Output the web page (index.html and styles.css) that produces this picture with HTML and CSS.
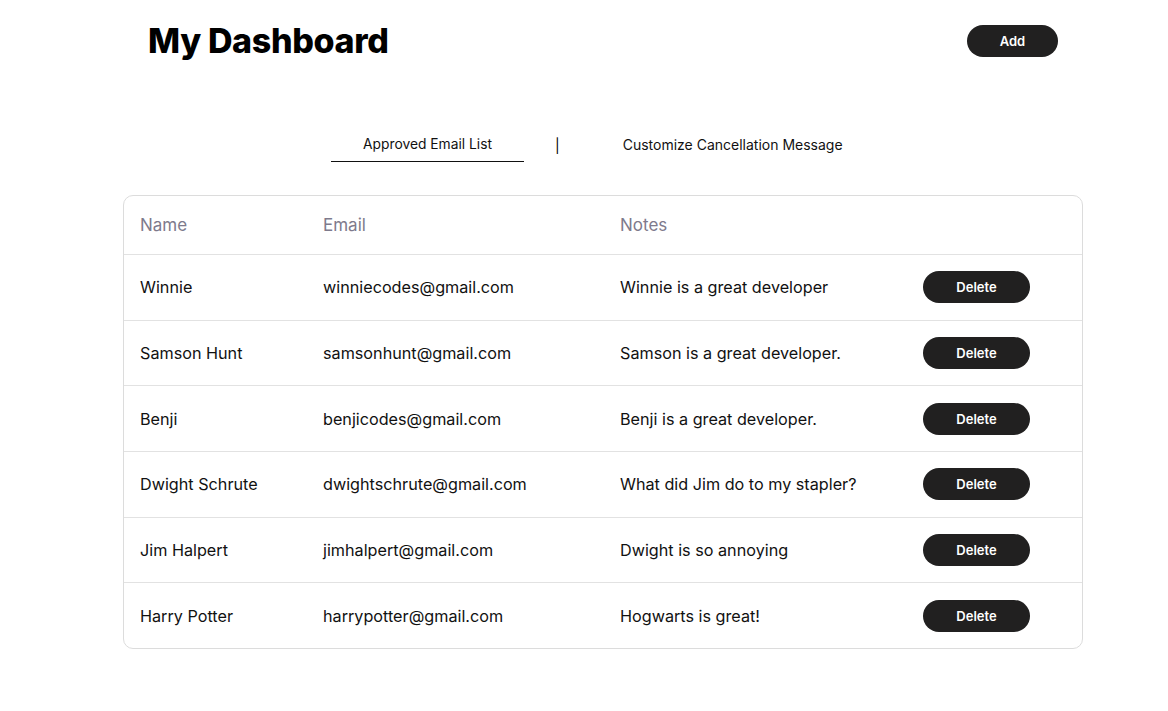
FILE: index.html
```html
<!DOCTYPE html>
<html>
<head>
<meta charset="utf-8">
<link rel="stylesheet" href="styles.css">
</head>
<body>
<div class="page">
  <header class="top">
    <h1 class="title">My Dashboard</h1>
    <button class="btn btn-add">Add</button>
  </header>
  <nav class="tabs">
    <div class="tab active">Approved Email List</div>
    <div class="sep">|</div>
    <div class="tab">Customize Cancellation Message</div>
  </nav>
  <div class="card">
    <div class="row head">
      <div class="cell">Name</div>
      <div class="cell">Email</div>
      <div class="cell">Notes</div>
      <div class="cell"></div>
    </div>
    <div class="row">
      <div class="cell">Winnie</div>
      <div class="cell">winniecodes@gmail.com</div>
      <div class="cell">Winnie is a great developer</div>
      <div class="cell"><button class="btn btn-del">Delete</button></div>
    </div>
    <div class="row">
      <div class="cell">Samson Hunt</div>
      <div class="cell">samsonhunt@gmail.com</div>
      <div class="cell">Samson is a great developer.</div>
      <div class="cell"><button class="btn btn-del">Delete</button></div>
    </div>
    <div class="row">
      <div class="cell">Benji</div>
      <div class="cell">benjicodes@gmail.com</div>
      <div class="cell">Benji is a great developer.</div>
      <div class="cell"><button class="btn btn-del">Delete</button></div>
    </div>
    <div class="row">
      <div class="cell">Dwight Schrute</div>
      <div class="cell">dwightschrute@gmail.com</div>
      <div class="cell">What did Jim do to my stapler?</div>
      <div class="cell"><button class="btn btn-del">Delete</button></div>
    </div>
    <div class="row">
      <div class="cell">Jim Halpert</div>
      <div class="cell">jimhalpert@gmail.com</div>
      <div class="cell">Dwight is so annoying</div>
      <div class="cell"><button class="btn btn-del">Delete</button></div>
    </div>
    <div class="row">
      <div class="cell">Harry Potter</div>
      <div class="cell">harrypotter@gmail.com</div>
      <div class="cell">Hogwarts is great!</div>
      <div class="cell"><button class="btn btn-del">Delete</button></div>
    </div>
  </div>
</div>
</body>
</html>
```
FILE: styles.css
```css
* { box-sizing: border-box; }
html, body { margin: 0; padding: 0; background: #fff; }
body {
  font-family: "Inter", "Open Sans", sans-serif;
  color: #111;
}
.page {
  width: 1168px;
  padding: 0 86px 0 123px;
}
.top {
  display: flex;
  justify-content: space-between;
  align-items: center;
  height: 82px;
  padding: 0 24px 0 25px;
}
.title {
  margin: 0;
  margin-top: -1px;
  font-size: 34px;
  font-weight: 800;
  letter-spacing: -0.35px;
  color: #000;
}
.btn {
  border: none;
  background: #212020;
  color: #fff;
  font-family: inherit;
  font-weight: 600;
  border-radius: 16px;
  cursor: pointer;
}
.btn-add {
  width: 91px;
  height: 32px;
  font-size: 13px;
  margin-top: -1px;
}
.tabs {
  display: flex;
  align-items: flex-start;
  margin-top: 45px;
  padding-left: 208px;
  height: 68px;
}
.tab {
  font-size: 14px;
  color: #111;
  line-height: 17px;
  padding-top: 9px;
}
.tab.active {
  font-size: 13.8px;
  width: 193px;
  text-align: center;
  padding-bottom: 8px;
  border-bottom: 1px solid #111;
}
.sep {
  font-size: 14px;
  line-height: 17px;
  padding-top: 10px;
  margin-left: 31px;
  margin-right: 63px;
  color: #000;
}
.card {
  width: 960px;
  border: 1px solid #dcdcdc;
  border-radius: 10px;
}
.row {
  display: grid;
  grid-template-columns: 183px 297px 303px 1fr;
  align-items: center;
  height: 65.67px;
  border-top: 1px solid #e2e2e2;
  font-size: 16.2px;
}
.row.head {
  border-top: none;
  height: 58px;
  color: #7e7a8c;
  font-size: 17px;
}
.cell {
  padding-left: 16px;
  white-space: nowrap;
}
.btn-del {
  width: 107px;
  height: 32px;
  font-size: 13px;
}
```
